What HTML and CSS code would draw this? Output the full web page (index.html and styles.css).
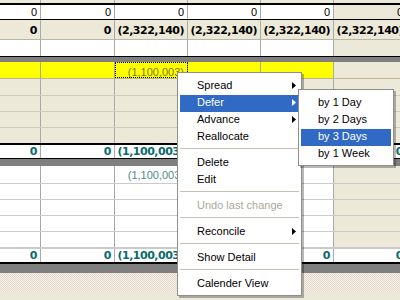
FILE: index.html
```html
<!DOCTYPE html>
<html>
<head>
<meta charset="utf-8">
<link rel="stylesheet" href="styles.css">
</head>
<body>
<div class="sheet">
  <div class="row strip"><div></div><div></div><div></div><div></div><div></div><div></div></div>
  <div class="row ra"><div>0</div><div>0</div><div>0</div><div>0</div><div>0</div><div class="bg">0</div></div>
  <div class="row rb"><div>0</div><div>0</div><div>(2,322,140)</div><div>(2,322,140)</div><div>(2,322,140)</div><div>(2,322,140)</div></div>
  <div class="row rc"><div></div><div></div><div></div><div></div><div></div><div class="bg"></div></div>
  <div class="band b1"></div>
  <div class="row rd"><div></div><div></div><div class="focus">(1,100,003)</div><div></div><div></div><div class="bg"></div></div>
  <div class="row beige h16"><div></div><div></div><div></div><div></div><div></div><div></div></div>
  <div class="row beige"><div></div><div></div><div></div><div></div><div></div><div></div></div>
  <div class="row beige"><div></div><div></div><div></div><div></div><div></div><div></div></div>
  <div class="row beige endb"><div></div><div></div><div></div><div></div><div></div><div></div></div>
  <div class="row tot"><div>0</div><div>0</div><div>(1,100,003)</div><div></div><div></div><div>0</div></div>
  <div class="band b2"></div>
  <div class="row white rj"><div></div><div></div><div class="lt">(1,100,003)</div><div></div><div></div><div class="bg"></div></div>
  <div class="row white"><div></div><div></div><div></div><div></div><div></div><div class="bg"></div></div>
  <div class="row white"><div></div><div></div><div></div><div></div><div></div><div class="bg"></div></div>
  <div class="row white"><div></div><div></div><div></div><div></div><div></div><div class="bg"></div></div>
  <div class="row white endb"><div></div><div></div><div></div><div></div><div></div><div class="bg"></div></div>
  <div class="row tot totb"><div>0</div><div>0</div><div>(1,100,003)</div><div></div><div>0</div><div>0</div></div>
  <div class="band b3"></div>
  <div class="hatch"></div>
  <div class="foot"></div>
</div>

<div class="menu main">
  <div class="mi">Spread<svg class="arr" width="4" height="7" viewBox="0 0 4 7"><path d="M0 0L4 3.5L0 7z"/></svg></div>
  <div class="mi on">Defer<svg class="arr" width="4" height="7" viewBox="0 0 4 7"><path d="M0 0L4 3.5L0 7z"/></svg></div>
  <div class="mi">Advance<svg class="arr" width="4" height="7" viewBox="0 0 4 7"><path d="M0 0L4 3.5L0 7z"/></svg></div>
  <div class="mi">Reallocate</div>
  <div class="sep"></div>
  <div class="mi">Delete</div>
  <div class="mi">Edit</div>
  <div class="sep"></div>
  <div class="mi dis">Undo last change</div>
  <div class="sep"></div>
  <div class="mi">Reconcile<svg class="arr" width="4" height="7" viewBox="0 0 4 7"><path d="M0 0L4 3.5L0 7z"/></svg></div>
  <div class="sep"></div>
  <div class="mi">Show Detail</div>
  <div class="sep"></div>
  <div class="mi">Calender View</div>
</div>

<div class="menu sub">
  <div class="mi">by 1 Day</div>
  <div class="mi">by 2 Days</div>
  <div class="mi on">by 3 Days</div>
  <div class="mi">by 1 Week</div>
</div>
</body>
</html>
```

FILE: styles.css
```css
html, body {
  margin: 0;
  padding: 0;
  width: 400px;
  height: 300px;
  overflow: hidden;
  background: #ece9d8;
}

.sheet {
  width: 407px;
  font-family: "Liberation Sans", Arial, sans-serif;
  font-size: 11px;
  color: #000;
}

.row {
  display: flex;
  height: 15px;
  border-bottom: 1px solid #c6c6c6;
  background: #fff;
}

.row > div {
  flex: none;
  box-sizing: border-box;
  width: 73px;
  height: 100%;
  border-right: 1px solid #a9a9a9;
  display: flex;
  align-items: center;
  justify-content: flex-end;
  padding-right: 3px;
  white-space: nowrap;
  overflow: hidden;
}

.row > div:first-child { width: 41px; }
.row > div:nth-child(2) { width: 74px; }

.row > .bg { background: #ece9d8; }

.strip {
  height: 3px;
  background: #ece9d8;
  border-bottom: 2px solid #000;
}

.ra {
  height: 14px;
  border-bottom-color: #000;
}

.rb {
  height: 19px;
  background: #ece9d8;
  border-bottom-color: #b8b6aa;
  font-family: "DejaVu Sans", sans-serif;
  font-weight: bold;
  letter-spacing: -0.5px;
}
.rb > div { padding-top: 2px; }

.rc {
  height: 16px;
  border-bottom-color: #000;
}

.band { background: #7f7f7f; }
.b1 { height: 5px; }
.b2 { height: 7px; }
.b3 { height: 9px; }

.rd {
  height: 16px;
  background: #ffff00;
  border-bottom-color: #b9b78c;
}
.rd > div { padding-top: 3px; }

.focus {
  color: #7c7c00;
  outline: 1px dotted #000;
  outline-offset: -1px;
}

.beige {
  background: #ece9d8;
  border-bottom-color: #cfccbd;
}
.h16 { height: 16px; }

.endb { border-bottom: 2px solid #000; }

.tot {
  height: 13px;
  border-bottom-color: #000;
  font-family: "DejaVu Sans", sans-serif;
  font-weight: bold;
  letter-spacing: -0.5px;
  color: #0a6b6b;
}
.totb { border-bottom-width: 2px; }

.white { border-bottom-color: #cacaca; }
.rj { height: 17px; }
.lt { color: #4f8a8a; }

.hatch {
  height: 19px;
  background: repeating-conic-gradient(#e6d9cc 0 25%, #f6f0e8 0 50%) 0 0 / 2px 2px;
}

.foot {
  height: 8px;
  background: #ece9d8;
}

/* context menus */
.menu {
  position: absolute;
  box-sizing: border-box;
  background: #fff;
  border: 1px solid #8e8e8e;
  box-shadow: 2px 2px 0 rgba(0, 0, 0, 0.28);
  font-family: "Liberation Sans", Arial, sans-serif;
  font-size: 11px;
  color: #000;
}

.main {
  left: 177px;
  top: 72px;
  width: 125px;
  padding: 5px 2px 2px;
}

.sub {
  left: 298px;
  top: 89px;
  width: 96px;
  padding: 5px 2px 2px;
}

.mi {
  position: relative;
  height: 17px;
  line-height: 15px;
  padding-left: 17px;
  white-space: nowrap;
}

.mi.on {
  background: #316ac5;
  color: #fff;
}

.mi.dis { color: #aca899; }

.arr {
  position: absolute;
  right: 3px;
  top: 4px;
  fill: #000;
}
.mi.on .arr { fill: #fff; }

.sep {
  height: 1px;
  margin: 2px 0 6px;
  background: #c5c2b2;
}
```
